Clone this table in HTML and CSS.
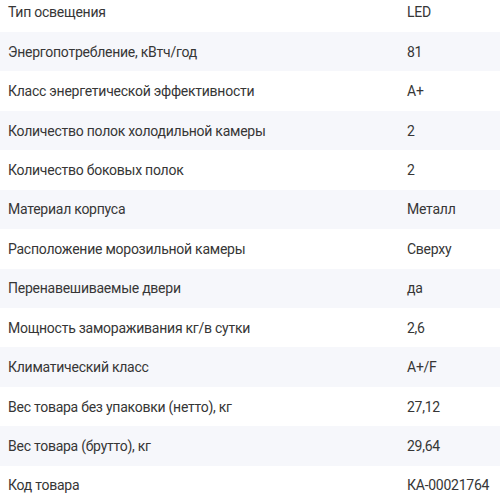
FILE: index.html
```html
<!DOCTYPE html>
<html lang="ru">
<head>
<meta charset="utf-8">
<link rel="stylesheet" href="styles.css">
</head>
<body>
<div class="specs">
  <div class="row"><div class="name">Тип освещения</div><div class="value">LED</div></div>
  <div class="row"><div class="name">Энергопотребление, кВтч/год</div><div class="value">81</div></div>
  <div class="row"><div class="name">Класс энергетической эффективности</div><div class="value">A+</div></div>
  <div class="row"><div class="name">Количество полок холодильной камеры</div><div class="value">2</div></div>
  <div class="row"><div class="name">Количество боковых полок</div><div class="value">2</div></div>
  <div class="row"><div class="name">Материал корпуса</div><div class="value">Металл</div></div>
  <div class="row"><div class="name">Расположение морозильной камеры</div><div class="value">Сверху</div></div>
  <div class="row"><div class="name">Перенавешиваемые двери</div><div class="value">да</div></div>
  <div class="row"><div class="name">Мощность замораживания кг/в сутки</div><div class="value">2,6</div></div>
  <div class="row"><div class="name">Климатический класс</div><div class="value">A+/F</div></div>
  <div class="row"><div class="name">Вес товара без упаковки (нетто), кг</div><div class="value">27,12</div></div>
  <div class="row"><div class="name">Вес товара (брутто), кг</div><div class="value">29,64</div></div>
  <div class="row"><div class="name">Код товара</div><div class="value">КА-00021764</div></div>
</div>
</body>
</html>
```
FILE: styles.css
```css
html, body {
  margin: 0;
  padding: 0;
  background: #ffffff;
  overflow: hidden;
}
body {
  font-family: Roboto, "Liberation Sans", sans-serif;
  font-size: 14px;
  color: #363636;
}
.specs {
  margin-top: -7.5px;
}
.row {
  display: grid;
  grid-template-columns: 399px 1fr;
  height: 39.45px;
  align-items: center;
  padding-left: 8px;
}
.row:nth-child(even) {
  background: #f6f7fb;
}
.name, .value {
  line-height: 20px;
  letter-spacing: -0.25px;
}
```
